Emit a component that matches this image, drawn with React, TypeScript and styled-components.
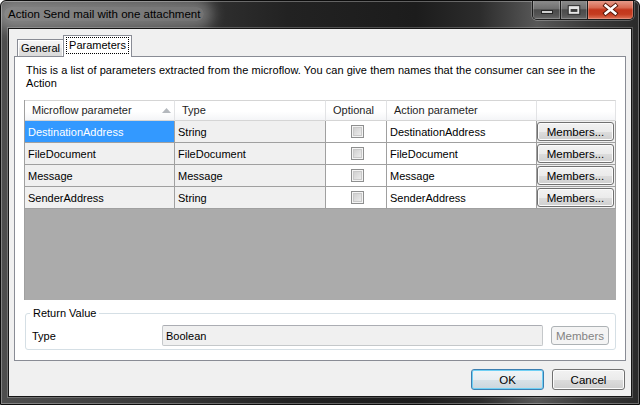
import React from "react";
import styled, { createGlobalStyle } from "styled-components";

const Global = createGlobalStyle`
  html, body { margin: 0; padding: 0; background: #ffffff; }
  body { font-family: "Liberation Sans", Arial, sans-serif; font-size: 11px; color: #000; }
  * { box-sizing: border-box; }
`;

const COLS = "150px 151px 61px 150px 79px";

const Window = styled.div`
  width: 640px;
  height: 405px;
  display: flex;
  flex-direction: column;
  background: linear-gradient(to right, #4e4e4e 0%, #383838 25%, #222 45%, #1c1c1c 65%, #2c2c2c 75%, #585858 84%, #3a3a3a 92%, #2a2a2a 100%);
  border: 1px solid #0c0c0c;
  border-radius: 6px 6px 0 0;
  box-shadow: inset 0 0 0 1px rgba(255, 255, 255, 0.3);
  overflow: hidden;
`;

const TitleBar = styled.div`
  height: 27px;
  flex-shrink: 0;
  display: flex;
  justify-content: space-between;
  align-items: flex-start;
`;

const Title = styled.span`
  margin: 6px 0 0 3px;
  padding: 0 4px;
  font-size: 11.5px;
  line-height: 14px;
  color: #000;
  background: rgba(255, 255, 255, 0.32);
  border-radius: 10px;
  box-shadow: 0 0 14px 9px rgba(255, 255, 255, 0.32);
`;

const Captions = styled.div`
  display: flex;
  height: 20px;
  margin: -1px 5px 0 0;
  border: 1px solid #1b1b1b;
  border-top: none;
  border-radius: 0 0 5px 5px;
  overflow: hidden;
  box-shadow: 0 1px 0 rgba(255, 255, 255, 0.25), -1px 0 0 rgba(255, 255, 255, 0.2), 1px 0 0 rgba(255, 255, 255, 0.2);
`;

const CapBtn = styled.div<{ $w: number; $close?: boolean }>`
  width: ${(p) => p.$w}px;
  height: 100%;
  display: flex;
  align-items: center;
  justify-content: center;
  background: ${(p) =>
    p.$close
      ? "linear-gradient(#e8a191 0%, #d86a52 40%, #c3361c 52%, #c43c20 75%, #df7257 100%)"
      : "linear-gradient(#8e8e8e 0%, #707070 45%, #4b4b4b 52%, #555 80%, #6a6a6a 100%)"};
  box-shadow: inset 0 0 0 1px rgba(255, 255, 255, 0.22);
  & + & {
    border-left: 1px solid #1b1b1b;
  }
`;

const Body = styled.div`
  flex: 1;
  min-height: 0;
  display: flex;
  padding: 0 7px 7px 7px;
`;

const Client = styled.div`
  flex: 1;
  display: flex;
  flex-direction: column;
  background: #f0f0f0;
  border: 1px solid #151515;
  box-shadow: 0 0 0 1px rgba(255, 255, 255, 0.22);
`;

const TabStrip = styled.div`
  height: 27px;
  flex-shrink: 0;
  display: flex;
  align-items: flex-end;
  padding-left: 8px;
`;

const Tab = styled.div<{ $active?: boolean }>`
  display: flex;
  align-items: center;
  justify-content: center;
  border: 1px solid #898c95;
  border-bottom: none;
  position: relative;
  z-index: 1;
  ${(p) =>
    p.$active
      ? `
    width: 69px;
    height: 22px;
    margin-bottom: -1px;
    margin-left: -1px;
    background: #fff;
    padding-bottom: 2px;
  `
      : `
    width: 47px;
    height: 17px;
    background: linear-gradient(#f6f6f6 0%, #ececec 50%, #e2e2e2 51%, #dadada 100%);
    box-shadow: inset 1px 1px 0 #fff, inset -1px 0 0 #fff;
  `}
`;

const FocusText = styled.span`
  outline: 1px dotted #000;
  outline-offset: 0;
  padding: 1px 2px;
  line-height: 13px;
`;

const Panel = styled.div`
  flex: 1;
  min-height: 0;
  margin: 0 5px;
  background: #fff;
  border: 1px solid #898c95;
  display: flex;
  flex-direction: column;
  padding: 7px 9px 0 9px;
`;

const Description = styled.p`
  margin: 0;
  padding-left: 2px;
  line-height: 13px;
  height: 26px;
  letter-spacing: 0.05px;
`;

const GridBox = styled.div`
  margin-top: 10px;
  height: 200px;
  flex-shrink: 0;
  background: #ababab;
  border-left: 1px solid #a0a0a0;
  display: flex;
  flex-direction: column;
`;

const HeaderRow = styled.div`
  display: grid;
  grid-template-columns: ${COLS};
  height: 21px;
`;

const HeaderCell = styled.div`
  display: flex;
  align-items: center;
  padding: 0 3px 1px 7px;
  background: linear-gradient(#ffffff 0%, #ffffff 55%, #f4f5f7 100%);
  border-top: 1px solid #d5d5d5;
  border-right: 1px solid #e2e3e5;
  border-bottom: 1px solid #d5d5d5;
  color: #1e1e1e;
`;

const SortArrow = styled.svg`
  margin-left: auto;
`;

const Row = styled.div`
  display: grid;
  grid-template-columns: ${COLS};
  height: 22px;
`;

const Cell = styled.div<{ $bg: string; $selected?: boolean; $center?: boolean }>`
  display: flex;
  align-items: center;
  justify-content: ${(p) => (p.$center ? "center" : "flex-start")};
  padding: 0 0 0 3px;
  background: ${(p) => (p.$selected ? "#3399ff" : p.$bg)};
  color: ${(p) => (p.$selected ? "#fff" : "#000")};
  border-right: 1px solid #a0a0a0;
  border-bottom: 1px solid #a0a0a0;
  white-space: nowrap;
`;

const ButtonCell = styled.div`
  display: flex;
  align-items: center;
  padding: 0;
  background: #f0f0f0;
  border-right: 1px solid #a0a0a0;
  border-bottom: 1px solid #a0a0a0;
`;

const Check = styled.span`
  width: 13px;
  height: 13px;
  border: 1px solid #8e8f8f;
  background: linear-gradient(135deg, #c8c8c8 0%, #e2e2e2 60%, #f4f4f4 100%);
  box-shadow: inset 0 0 0 1px #f4f4f4, inset 0 0 0 2px #c9c9c9;
`;

const WinButton = styled.button<{ $default?: boolean }>`
  font-family: "Liberation Sans", Arial, sans-serif;
  font-size: 11.5px;
  color: #000;
  border: 1px solid ${(p) => (p.$default ? "#3c7fb1" : "#707070")};
  border-radius: 3px;
  background: ${(p) =>
    p.$default
      ? "linear-gradient(#f0f4f7 0%, #e8eef2 50%, #d8e2e8 51%, #cbd6dd 100%)"
      : "linear-gradient(#f2f2f2 0%, #ebebeb 50%, #dddddd 51%, #cfcfcf 100%)"};
  box-shadow: inset 0 0 0 1px ${(p) => (p.$default ? "#6fd0f5" : "#fcfcfc")};
  padding: 0;
  display: flex;
  align-items: center;
  justify-content: center;
`;

const GridButton = styled(WinButton)`
  width: 77px;
  height: 19px;
  margin-left: 0;
`;

const DialogButton = styled(WinButton)`
  width: 73px;
  height: 21px;
`;

const DisabledButton = styled.button`
  font-family: "Liberation Sans", Arial, sans-serif;
  font-size: 11.5px;
  color: #838383;
  width: 58px;
  height: 19px;
  border: 1px solid #adb2b5;
  border-radius: 3px;
  background: #f4f4f4;
  padding: 0;
`;

const Group = styled.fieldset`
  margin: 7px 0 0 1px;
  padding: 5px 6px 3px 6px;
  border: 1px solid #d5dfe5;
  border-radius: 3px;
  min-inline-size: 0;
`;

const Legend = styled.legend`
  margin-left: -2px;
  padding: 0 3px;
  line-height: 13px;
  font-size: 11px;
`;

const FieldRow = styled.div`
  display: flex;
  align-items: center;
  gap: 8px;
`;

const FieldLabel = styled.span`
  width: 122px;
`;

const TextBox = styled.div`
  flex: 1;
  height: 21px;
  display: flex;
  align-items: center;
  padding-left: 3px;
  background: #f0f0f0;
  border: 1px solid #c5c8ca;
  border-top-color: #abadb3;
  border-radius: 2px;
`;

const Footer = styled.div`
  height: 35px;
  flex-shrink: 0;
  display: flex;
  justify-content: flex-end;
  align-items: flex-start;
  gap: 8px;
  padding: 8px 6px 0 0;
`;

type Param = { name: string; type: string; action: string; selected?: boolean };

const params: Param[] = [
  { name: "DestinationAddress", type: "String", action: "DestinationAddress", selected: true },
  { name: "FileDocument", type: "FileDocument", action: "FileDocument" },
  { name: "Message", type: "Message", action: "Message" },
  { name: "SenderAddress", type: "String", action: "SenderAddress" },
];

export default function App() {
  return (
    <>
      <Global />
      <Window>
        <TitleBar>
          <Title>Action Send mail with one attachment</Title>
          <Captions>
            <CapBtn $w={27}>
              <svg width="27" height="19" viewBox="0 0 27 19">
                <rect x="8.5" y="10.5" width="11" height="3" fill="#cfcfcf" stroke="#262626" />
              </svg>
            </CapBtn>
            <CapBtn $w={27}>
              <svg width="27" height="19" viewBox="0 0 27 19">
                <rect x="7.5" y="5.5" width="12" height="9" fill="#e6e6e6" stroke="#262626" />
                <rect x="10" y="9" width="7" height="3" fill="#3a3a3a" />
              </svg>
            </CapBtn>
            <CapBtn $w={46} $close>
              <svg width="46" height="19" viewBox="0 0 46 19">
                <path d="M18 5.5 L28 13.5 M28 5.5 L18 13.5" stroke="#5a1a0c" strokeWidth="4.6" strokeLinecap="square" />
                <path d="M18 5.5 L28 13.5 M28 5.5 L18 13.5" stroke="#ffffff" strokeWidth="2.6" strokeLinecap="square" />
              </svg>
            </CapBtn>
          </Captions>
        </TitleBar>
        <Body>
          <Client>
            <TabStrip>
              <Tab>General</Tab>
              <Tab $active>
                <FocusText>Parameters</FocusText>
              </Tab>
            </TabStrip>
            <Panel>
              <Description>
                This is a list of parameters extracted from the microflow. You can give them names that the consumer can see in the
                <br />
                Action
              </Description>
              <GridBox>
                <HeaderRow>
                  <HeaderCell>
                    Microflow parameter
                    <SortArrow width="9" height="5" viewBox="0 0 9 5">
                      <path d="M0 5 L4.5 0 L9 5 Z" fill="#b4b8bd" />
                    </SortArrow>
                  </HeaderCell>
                  <HeaderCell>Type</HeaderCell>
                  <HeaderCell>Optional</HeaderCell>
                  <HeaderCell>Action parameter</HeaderCell>
                  <HeaderCell />
                </HeaderRow>
                {params.map((p) => (
                  <Row key={p.name}>
                    <Cell $bg="#f0f0f0" $selected={p.selected}>
                      {p.name}
                    </Cell>
                    <Cell $bg="#f0f0f0">{p.type}</Cell>
                    <Cell $bg="#ffffff" $center>
                      <Check />
                    </Cell>
                    <Cell $bg="#ffffff">{p.action}</Cell>
                    <ButtonCell>
                      <GridButton>Members...</GridButton>
                    </ButtonCell>
                  </Row>
                ))}
              </GridBox>
              <Group>
                <Legend>Return Value</Legend>
                <FieldRow>
                  <FieldLabel>Type</FieldLabel>
                  <TextBox>Boolean</TextBox>
                  <DisabledButton>Members</DisabledButton>
                </FieldRow>
              </Group>
            </Panel>
            <Footer>
              <DialogButton $default>OK</DialogButton>
              <DialogButton>Cancel</DialogButton>
            </Footer>
          </Client>
        </Body>
      </Window>
    </>
  );
}
